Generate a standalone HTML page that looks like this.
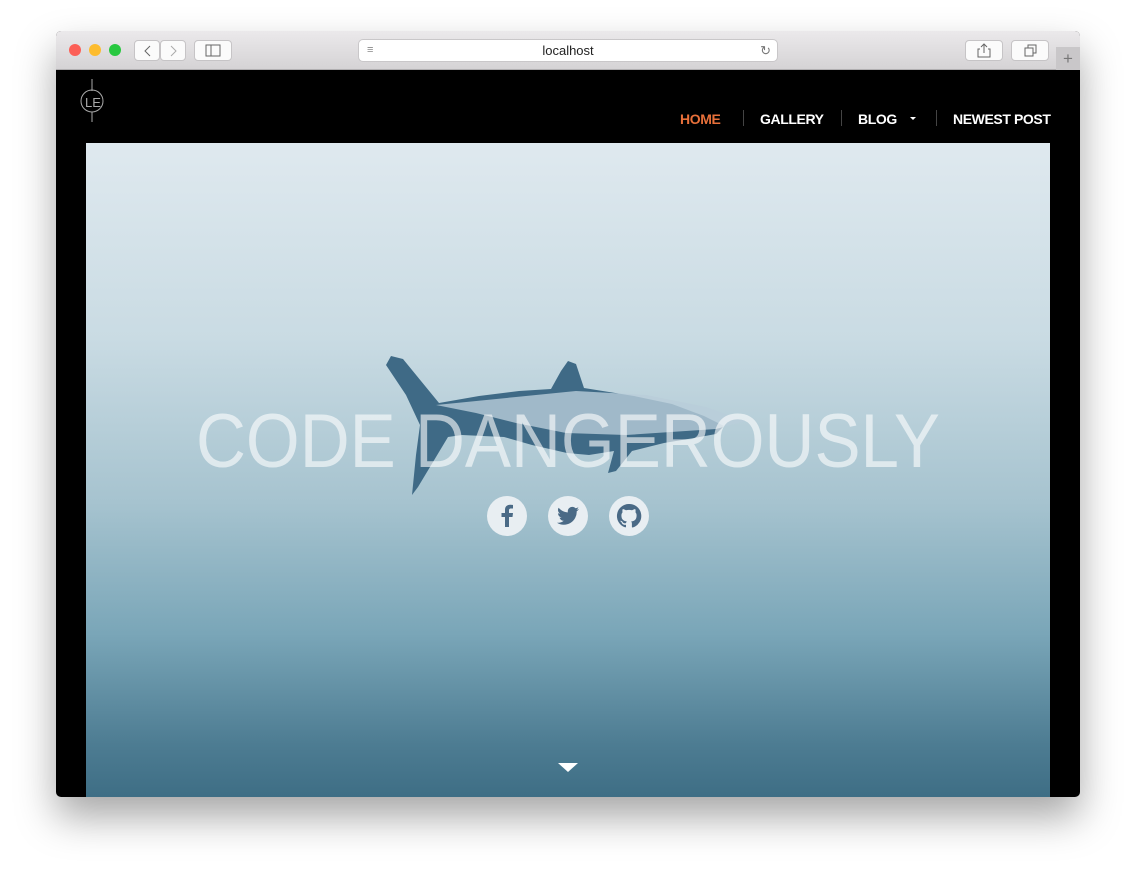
<!DOCTYPE html>
<html><head><style>
body{margin:0;width:1136px;height:877px;background:#fff;position:relative;overflow:hidden;font-family:"Liberation Sans",sans-serif}
.win{position:absolute;left:56px;top:31px;width:1024px;height:766px;border-radius:5px;overflow:hidden;box-shadow:0 20px 40px rgba(0,0,0,.35);background:#000}
.bar{position:absolute;left:0;top:0;width:1024px;height:38px;background:linear-gradient(#ebe9eb,#d5d3d5);border-bottom:1px solid #b0aeb0}
.dot{position:absolute;top:13px;width:12px;height:12px;border-radius:50%}
.btn{position:absolute;top:9px;height:21px;background:#fbfbfb;border:1px solid #c6c4c6;border-radius:4px;box-sizing:border-box}
.url{position:absolute;left:302px;top:8px;width:420px;height:23px;background:#fff;border:1px solid #c9c7c9;border-radius:5px;box-sizing:border-box;text-align:center;font-size:13px;line-height:21px;color:#222}
.hero{position:absolute;left:30px;top:112px;width:964px;height:654px;background:linear-gradient(#dfe9ef 0%,#c9dbe3 30%,#a6c3cf 55%,#7aa6b8 75%,#4d7c92 92%,#3e6e85 100%)}
.nav{position:absolute;top:80px;font-weight:bold;font-size:14px;color:#fff;letter-spacing:-0.4px}
.sep{position:absolute;top:79px;width:1px;height:16px;background:#444}
.ic{position:absolute;top:465px;width:40px;height:40px;border-radius:50%;background:#e8eef2}
</style></head><body>
<div class="win">
<div class="bar">
<div class="dot" style="left:13px;background:#fc5f57"></div>
<div class="dot" style="left:33px;background:#fdbc2e"></div>
<div class="dot" style="left:53px;background:#28c840"></div>
<div class="btn" style="left:78px;width:26px"><svg width="24" height="19"><path d="M15 5l-5 5 5 5" stroke="#666" fill="none"/></svg></div>
<div class="btn" style="left:104px;width:26px"><svg width="24" height="19"><path d="M10 5l5 5-5 5" stroke="#aaa" fill="none"/></svg></div>
<div class="btn" style="left:138px;width:38px"><svg width="36" height="19"><rect x="11" y="4" width="14" height="11" stroke="#666" fill="none"/><path d="M16 4v11" stroke="#666"/></svg></div>
<div class="url"><span style="position:absolute;left:8px;top:0;color:#888;font-size:11px">≡</span>localhost<span style="position:absolute;right:6px;top:0;color:#777">↻</span></div>
<div class="btn" style="left:909px;width:38px"><svg width="36" height="19"><path d="M18 3v9M15 6l3-3 3 3M14 8h-2v8h12V8h-2" stroke="#666" fill="none"/></svg></div>
<div class="btn" style="left:955px;width:38px"><svg width="36" height="19"><rect x="13" y="7" width="8" height="8" stroke="#666" fill="none"/><path d="M16 7V4h8v8h-3" stroke="#666" fill="none"/></svg></div>
<div style="position:absolute;left:1000px;top:16px;width:24px;height:23px;background:#c9c7c9;color:#777;text-align:center;font-size:17px;line-height:23px">+</div>
</div>
<svg style="position:absolute;left:22px;top:48px" width="30" height="45"><path d="M14 0v12M14 33v10" stroke="#aaa"/><circle cx="14" cy="22" r="11" stroke="#aaa" fill="none"/><text x="7" y="28" font-size="13" fill="#aaa">LE</text></svg>
<div class="nav" style="left:624px;color:#e8703a">HOME</div>
<div class="sep" style="left:687px"></div>
<div class="nav" style="left:704px">GALLERY</div>
<div class="sep" style="left:785px"></div>
<div class="nav" style="left:802px">BLOG</div>
<div style="position:absolute;left:854px;top:86px;border:3px solid transparent;border-top:3px solid #fff"></div>
<div class="sep" style="left:880px"></div>
<div class="nav" style="left:897px">NEWEST POST</div>
<div class="hero">
<svg width="964" height="654" style="position:absolute;left:0;top:0">
<path d="M305 213l12 3 36 44 40-7 40-5 32-2 10-18 7-10 8 3 8 24 50 8 38 8 32 12 20 10-8 8-22 4-30 5-32 8-16 20-8 2 6-22-25 4-22-2-35-8-28-8-42-2-14 2-30 50-6 8 4-40 4-30-14-30-20-30z" fill="#3f6a86"/>
<path d="M350 262l80-8 60-6 70 4 60 12 40 14-30 8-90 6-60-2-50-10-40-10z" fill="#b9cdd9" opacity=".8"/>
<text x="110" y="324" font-size="76" fill="#fff" textLength="744" lengthAdjust="spacingAndGlyphs" style="font-family:'Liberation Sans'" opacity=".6">CODE DANGEROUSLY</text>
<path d="M472 620h20l-10 9z" fill="#fff"/>
</svg>
</div>
<div class="ic" style="left:431px"><svg width="40" height="40"><path d="M22 31V21h3.5l.5-4h-4v-2.5c0-1.2.4-2 2-2h2V9c-.4 0-1.6-.2-3-.2-3 0-5 1.8-5 5.1V17h-3.5v4H18v10z" fill="#4a6a86"/></svg></div>
<div class="ic" style="left:492px"><svg width="40" height="40"><path d="M31 13c-.8.4-1.7.6-2.6.7.9-.6 1.600-1.4 2-2.5-.9.5-1.8.9-2.8 1.1a4.5 4.5 0 0 0-7.7 4.1c-3.7-.2-7-2-9.3-4.7-1.2 2-.6 4.6 1.4 6-.7 0-1.4-.2-2-.6 0 2.2 1.5 4 3.6 4.5-.7.2-1.4.2-2 .1.6 1.8 2.3 3.1 4.2 3.1A9 9 0 0 1 9 26.7 12.8 12.8 0 0 0 28.7 15.3c.9-.6 1.7-1.4 2.3-2.3z" fill="#4a6a86"/></svg></div>
<div class="ic" style="left:553px"><svg width="40" height="40"><path d="M20 8a12 12 0 0 0-3.8 23.4c.6.1.8-.3.8-.6v-2.1c-3.3.7-4-1.4-4-1.4-.6-1.4-1.3-1.8-1.3-1.8-1.1-.7.1-.7.1-.7 1.2.1 1.800 1.2 1.8 1.2 1.1 1.8 2.8 1.3 3.5 1 .1-.8.4-1.300.8-1.6-2.7-.3-5.5-1.3-5.5-5.9 0-1.3.5-2.4 1.2-3.2-.1-.3-.5-1.5.1-3.2 0 0 1-.3 3.3 1.2a11.5 11.5 0 0 1 6 0c2.3-1.5 3.3-1.2 3.3-1.2.6 1.7.2 2.9.1 3.2.8.8 1.2 1.9 1.2 3.2 0 4.6-2.8 5.6-5.5 5.9.4.4.8 1.1.8 2.2v3.3c0 .3.2.7.8.6A12 12 0 0 0 20 8z" fill="#4a6a86"/></svg></div>
</div>
</body></html>
